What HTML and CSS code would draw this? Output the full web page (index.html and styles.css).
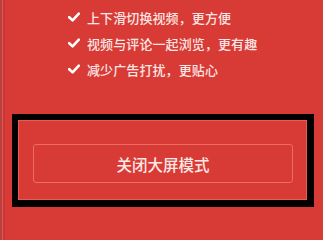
FILE: index.html
```html
<!DOCTYPE html>
<html lang="zh-CN">
<head>
<meta charset="utf-8">
<link rel="stylesheet" href="styles.css">
</head>
<body>
<div class="page">
  <ul class="features">
    <li class="feature"><svg class="check" viewBox="0 0 12 10" width="12" height="10"><path d="M1.2 5.2 L4.6 8.4 L10.8 1.6" fill="none" stroke="#fff" stroke-width="2.6" stroke-linecap="round" stroke-linejoin="round"/></svg><span>上下滑切换视频，更方便</span></li>
    <li class="feature"><svg class="check" viewBox="0 0 12 10" width="12" height="10"><path d="M1.2 5.2 L4.6 8.4 L10.8 1.6" fill="none" stroke="#fff" stroke-width="2.6" stroke-linecap="round" stroke-linejoin="round"/></svg><span>视频与评论一起浏览，更有趣</span></li>
    <li class="feature"><svg class="check" viewBox="0 0 12 10" width="12" height="10"><path d="M1.2 5.2 L4.6 8.4 L10.8 1.6" fill="none" stroke="#fff" stroke-width="2.6" stroke-linecap="round" stroke-linejoin="round"/></svg><span>减少广告打扰，更贴心</span></li>
  </ul>
  <div class="frame">
    <div class="inner">
      <button class="close-btn">关闭大屏模式</button>
    </div>
  </div>
</div>
</body>
</html>
```

FILE: styles.css
```css
html, body {
  margin: 0;
  padding: 0;
  width: 323px;
  height: 210px;
  overflow: hidden;
}
body {
  background: linear-gradient(to right, #b9403e 0 2px, #e4554f 2px 3px, #c63834 3px 5px, #d83a35 5px);
  font-family: "Noto Sans CJK SC", "Noto Sans", sans-serif;
}
.page {
  display: flex;
  flex-direction: column;
  height: 210px;
}
.features {
  list-style: none;
  margin: 0;
  padding: 4px 0 0 68px;
  height: 110px;
  box-sizing: border-box;
}
.feature {
  display: flex;
  align-items: center;
  height: 26px;
  color: #fbe6e3;
  font-size: 13px;
  font-weight: 500;
  letter-spacing: 0.1px;
}
.check {
  flex: none;
  margin-right: 7px;
}
.frame {
  margin: 4px 9px 0 12px;
  height: 93px;
  box-sizing: border-box;
  border-style: solid;
  border-color: #050000;
  border-width: 6px 7px 7px 6px;
  background: #d83a35;
}
.inner {
  height: 100%;
  box-sizing: border-box;
  border: 1px solid rgba(255, 160, 150, 0.35);
  padding: 23px 13px 0 14px;
}
.close-btn {
  display: block;
  width: 100%;
  height: 39px;
  background: transparent;
  border: 1px solid #ec6b63;
  border-radius: 3px;
  color: #fbe8e5;
  font-family: "Noto Sans CJK SC", "Noto Sans", sans-serif;
  font-size: 15.5px;
  font-weight: 500;
  padding: 0;
  cursor: pointer;
}
```
